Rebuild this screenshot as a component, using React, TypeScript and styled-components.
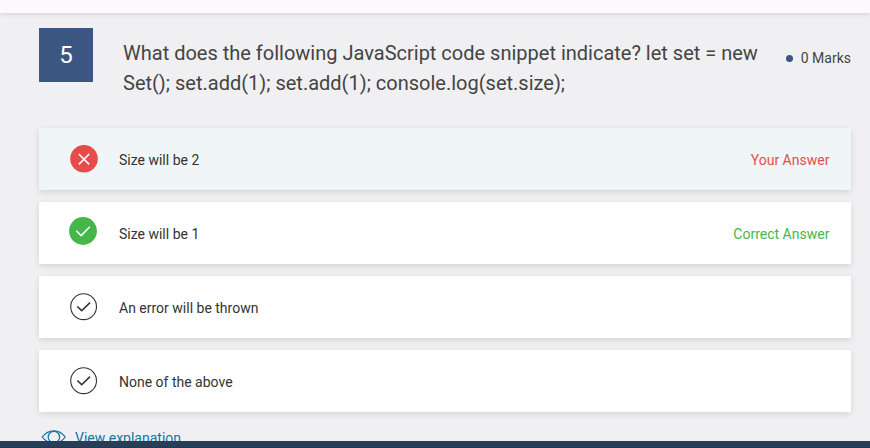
import React from "react";
import styled, { createGlobalStyle } from "styled-components";

type Status = "wrong" | "correct" | "neutral";

const GlobalStyle = createGlobalStyle`
  * { box-sizing: border-box; }
  body {
    margin: 0;
    background: #f0f0f2;
    font-family: Roboto, sans-serif;
    color: #333;
  }
`;

const Page = styled.div`
  display: flex;
  flex-direction: column;
  height: 448px;
  overflow: hidden;
`;

const TopBar = styled.div`
  flex: none;
  height: 13px;
  background: #fbf9fb;
  box-shadow: 0 1px 5px rgba(0, 0, 0, 0.13);
`;

const Content = styled.main`
  flex: 1;
  min-height: 0;
  overflow: hidden;
  padding: 15px 19px 0 39px;
`;

const Header = styled.header`
  display: flex;
  height: 100px;
`;

const QuestionNumber = styled.div`
  flex: none;
  width: 54px;
  height: 54px;
  background: #3b5681;
  color: #fff;
  font-size: 24px;
  line-height: 54px;
  text-align: center;
`;

const Question = styled.h1`
  flex: none;
  width: 650px;
  margin: 10px 0 0 30px;
  font-size: 20px;
  font-weight: 400;
  line-height: 30px;
  color: #444;
`;

const Marks = styled.div`
  display: flex;
  align-items: center;
  gap: 8px;
  height: 20px;
  margin: 20px 0 0 auto;
  font-size: 14px;
  color: #444;
  white-space: nowrap;

  &::before {
    content: "";
    width: 7px;
    height: 7px;
    border-radius: 50%;
    background: #3b5681;
  }
`;

const Options = styled.div`
  display: flex;
  flex-direction: column;
  gap: 12px;
`;

const Option = styled.div<{ $selected: boolean }>`
  display: flex;
  align-items: center;
  height: 62px;
  padding: 2px 21.6px 0 30px;
  background: ${(p) => (p.$selected ? "#f0f6f8" : "#fff")};
  box-shadow: 0 2px 6px rgba(0, 0, 0, 0.12);
  font-size: 14px;
`;

const iconMargins: Record<Status, string> = {
  wrong: "-3px 20px 0 1px",
  correct: "-7px 21px 0 0",
  neutral: "-2px 20px 0 1px",
};

const StatusSvg = styled.svg<{ $status: Status }>`
  flex: none;
  width: 29px;
  height: 28px;
  margin: ${(p) => iconMargins[p.$status]};
`;

const Verdict = styled.span<{ $status: Status }>`
  margin-left: auto;
  color: ${(p) => (p.$status === "wrong" ? "#e64c4c" : "#45b649")};
`;

const Explanation = styled.a`
  display: flex;
  align-items: center;
  gap: 9px;
  height: 24px;
  margin: 14px 0 0 2px;
  font-size: 14px;
  color: #0d76a8;
`;

const EyeSvg = styled.svg`
  flex: none;
  width: 25px;
  height: 16px;
  margin-top: -3px;
`;

const Footer = styled.footer`
  flex: none;
  height: 7px;
  background: #283e56;
  border-bottom: 1px solid #263650;
`;

function StatusIcon({ status }: { status: Status }) {
  if (status === "wrong") {
    return (
      <StatusSvg $status={status} viewBox="0 0 29 28" fill="none">
        <circle cx="14" cy="13.7" r="13.8" fill="#e64c4c" />
        <path d="M8.8 9 19.2 19.4M19.2 9 8.8 19.4" stroke="#fff" strokeWidth="1.5" />
      </StatusSvg>
    );
  }
  if (status === "correct") {
    return (
      <StatusSvg $status={status} viewBox="0 0 29 28" fill="none">
        <circle cx="14" cy="14" r="13.9" fill="#45b649" />
        <path d="M7.2 13.8 12.2 18.6 20.8 9.7" stroke="#fff" strokeWidth="1.5" />
      </StatusSvg>
    );
  }
  return (
    <StatusSvg $status={status} viewBox="0 0 29 28" fill="none">
      <circle cx="13.6" cy="13.7" r="12.9" stroke="#333" strokeWidth="1.1" />
      <path d="M7.3 13.5 11.7 17.7 20 9.6" stroke="#333" strokeWidth="1.6" />
    </StatusSvg>
  );
}

function EyeIcon() {
  return (
    <EyeSvg viewBox="0 0 25 16" fill="none" stroke="#0d76a8" strokeWidth="1.2">
      <path d="M1.2 8C4.4 4 8.4 1.8 12.9 1.8S21.2 4 24.3 8C21.2 12 17.4 14.2 12.9 14.2S4.4 12 1.2 8Z" />
      <circle cx="12.9" cy="8" r="5.7" />
    </EyeSvg>
  );
}

const options: { text: string; status: Status; verdict?: string }[] = [
  { text: "Size will be 2", status: "wrong", verdict: "Your Answer" },
  { text: "Size will be 1", status: "correct", verdict: "Correct Answer" },
  { text: "An error will be thrown", status: "neutral" },
  { text: "None of the above", status: "neutral" },
];

export default function App() {
  return (
    <Page>
      <GlobalStyle />
      <TopBar />
      <Content>
        <Header>
          <QuestionNumber>5</QuestionNumber>
          <Question>
            What does the following JavaScript code snippet indicate? let set = new Set(); set.add(1);
            set.add(1); console.log(set.size);
          </Question>
          <Marks>0 Marks</Marks>
        </Header>
        <Options>
          {options.map((o) => (
            <Option key={o.text} $selected={o.status === "wrong"}>
              <StatusIcon status={o.status} />
              <span>{o.text}</span>
              {o.verdict && <Verdict $status={o.status}>{o.verdict}</Verdict>}
            </Option>
          ))}
        </Options>
        <Explanation>
          <EyeIcon />
          <span>View explanation</span>
        </Explanation>
      </Content>
      <Footer />
    </Page>
  );
}
